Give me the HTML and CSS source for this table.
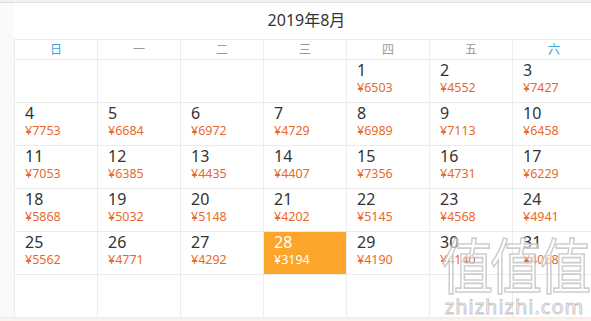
FILE: index.html
```html
<!DOCTYPE html>
<html lang="zh-CN">
<head>
<meta charset="utf-8">
<title>2019年8月</title>
<link rel="stylesheet" href="styles.css">
</head>
<body>
<div class="topbar"></div>
<div class="main">
  <div class="side"></div>
  <div class="calendar">
    <div class="title">2019年8月</div>
    <div class="week">
      <div class="wd weekend">日</div>
      <div class="wd">一</div>
      <div class="wd">二</div>
      <div class="wd">三</div>
      <div class="wd">四</div>
      <div class="wd">五</div>
      <div class="wd weekend">六</div>
    </div>
    <div class="days">
      <div class="day"></div>
      <div class="day"></div>
      <div class="day"></div>
      <div class="day"></div>
      <div class="day"><div class="num">1</div><div class="price">¥6503</div></div>
      <div class="day"><div class="num">2</div><div class="price">¥4552</div></div>
      <div class="day"><div class="num">3</div><div class="price">¥7427</div></div>

      <div class="day"><div class="num">4</div><div class="price">¥7753</div></div>
      <div class="day"><div class="num">5</div><div class="price">¥6684</div></div>
      <div class="day"><div class="num">6</div><div class="price">¥6972</div></div>
      <div class="day"><div class="num">7</div><div class="price">¥4729</div></div>
      <div class="day"><div class="num">8</div><div class="price">¥6989</div></div>
      <div class="day"><div class="num">9</div><div class="price">¥7113</div></div>
      <div class="day"><div class="num">10</div><div class="price">¥6458</div></div>

      <div class="day"><div class="num">11</div><div class="price">¥7053</div></div>
      <div class="day"><div class="num">12</div><div class="price">¥6385</div></div>
      <div class="day"><div class="num">13</div><div class="price">¥4435</div></div>
      <div class="day"><div class="num">14</div><div class="price">¥4407</div></div>
      <div class="day"><div class="num">15</div><div class="price">¥7356</div></div>
      <div class="day"><div class="num">16</div><div class="price">¥4731</div></div>
      <div class="day"><div class="num">17</div><div class="price">¥6229</div></div>

      <div class="day"><div class="num">18</div><div class="price">¥5868</div></div>
      <div class="day"><div class="num">19</div><div class="price">¥5032</div></div>
      <div class="day"><div class="num">20</div><div class="price">¥5148</div></div>
      <div class="day"><div class="num">21</div><div class="price">¥4202</div></div>
      <div class="day"><div class="num">22</div><div class="price">¥5145</div></div>
      <div class="day"><div class="num">23</div><div class="price">¥4568</div></div>
      <div class="day"><div class="num">24</div><div class="price">¥4941</div></div>

      <div class="day"><div class="num">25</div><div class="price">¥5562</div></div>
      <div class="day"><div class="num">26</div><div class="price">¥4771</div></div>
      <div class="day"><div class="num">27</div><div class="price">¥4292</div></div>
      <div class="day selected"><div class="num">28</div><div class="price">¥3194</div></div>
      <div class="day"><div class="num">29</div><div class="price">¥4190</div></div>
      <div class="day"><div class="num">30</div><div class="price">¥4140</div></div>
      <div class="day"><div class="num">31</div><div class="price">¥4068</div></div>

      <div class="day"></div>
      <div class="day"></div>
      <div class="day"></div>
      <div class="day"></div>
      <div class="day"></div>
      <div class="day"></div>
      <div class="day"></div>
    </div>
  </div>
</div>
<div class="footer"></div>
<div class="watermark">
  <div class="wm-logo">值值值</div>
  <div class="wm-text">zhizhizhi.com</div>
</div>
</body>
</html>
```
FILE: styles.css
```css
html, body {
  margin: 0;
  padding: 0;
}
body {
  width: 591px;
  height: 321px;
  overflow: hidden;
  background: #ffffff;
  font-family: "Noto Sans", "Noto Sans CJK SC", sans-serif;
  color: #333333;
  position: relative;
}
.topbar {
  height: 2px;
  background: #f1f1f1;
  border-bottom: 1px solid #dedede;
}
.main {
  display: flex;
  width: 595px;
}
.side {
  width: 14px;
  flex: none;
  background: #fafafa;
}
.calendar {
  width: 581px;
  flex: none;
}
.title {
  height: 36px;
  line-height: 35px;
  text-align: center;
  font-size: 16px;
  color: #333333;
  padding-left: 4px;
}
.week {
  display: grid;
  grid-template-columns: repeat(7, 83px);
  border-top: 1px solid #ececec;
  height: 19px;
}
.wd {
  border-left: 1px solid #ececec;
  text-align: center;
  font-size: 12px;
  line-height: 19px;
  color: #9a9a9a;
}
.wd.weekend {
  color: #35a6d6;
}
.days {
  display: grid;
  grid-template-columns: repeat(7, 83px);
  grid-auto-rows: 43px;
}
.day {
  border-left: 1px solid #ececec;
  border-top: 1px solid #ececec;
  padding: 1px 0 0 10px;
  box-sizing: border-box;
}
.num {
  font-size: 16px;
  line-height: 18px;
  color: #333333;
}
.price {
  font-size: 12.5px;
  line-height: 17px;
  color: #e8692e;
}
.day.selected {
  background: #fba62b;
  background-clip: padding-box;
}
.day.selected .num,
.day.selected .price {
  color: #ffffff;
}
.footer {
  height: 6px;
  background: #fcf1e8;
  border-top: 1px solid #ececec;
}
.watermark {
  position: absolute;
  left: 438px;
  top: 232px;
  width: 153px;
  text-align: center;
  pointer-events: none;
}
.wm-logo {
  font-family: "Noto Sans CJK SC", sans-serif;
  font-size: 52px;
  line-height: 64px;
  letter-spacing: -3px;
  transform: scaleY(1.15);
  color: rgba(255, 255, 255, 0.55);
  -webkit-text-stroke: 1.5px rgba(190, 190, 190, 0.75);
}
.wm-text {
  font-family: "Noto Sans", sans-serif;
  font-size: 20px;
  line-height: 22px;
  letter-spacing: 1px;
  color: rgba(255, 255, 255, 0.6);
  -webkit-text-stroke: 1px rgba(185, 185, 185, 0.8);
}
```
